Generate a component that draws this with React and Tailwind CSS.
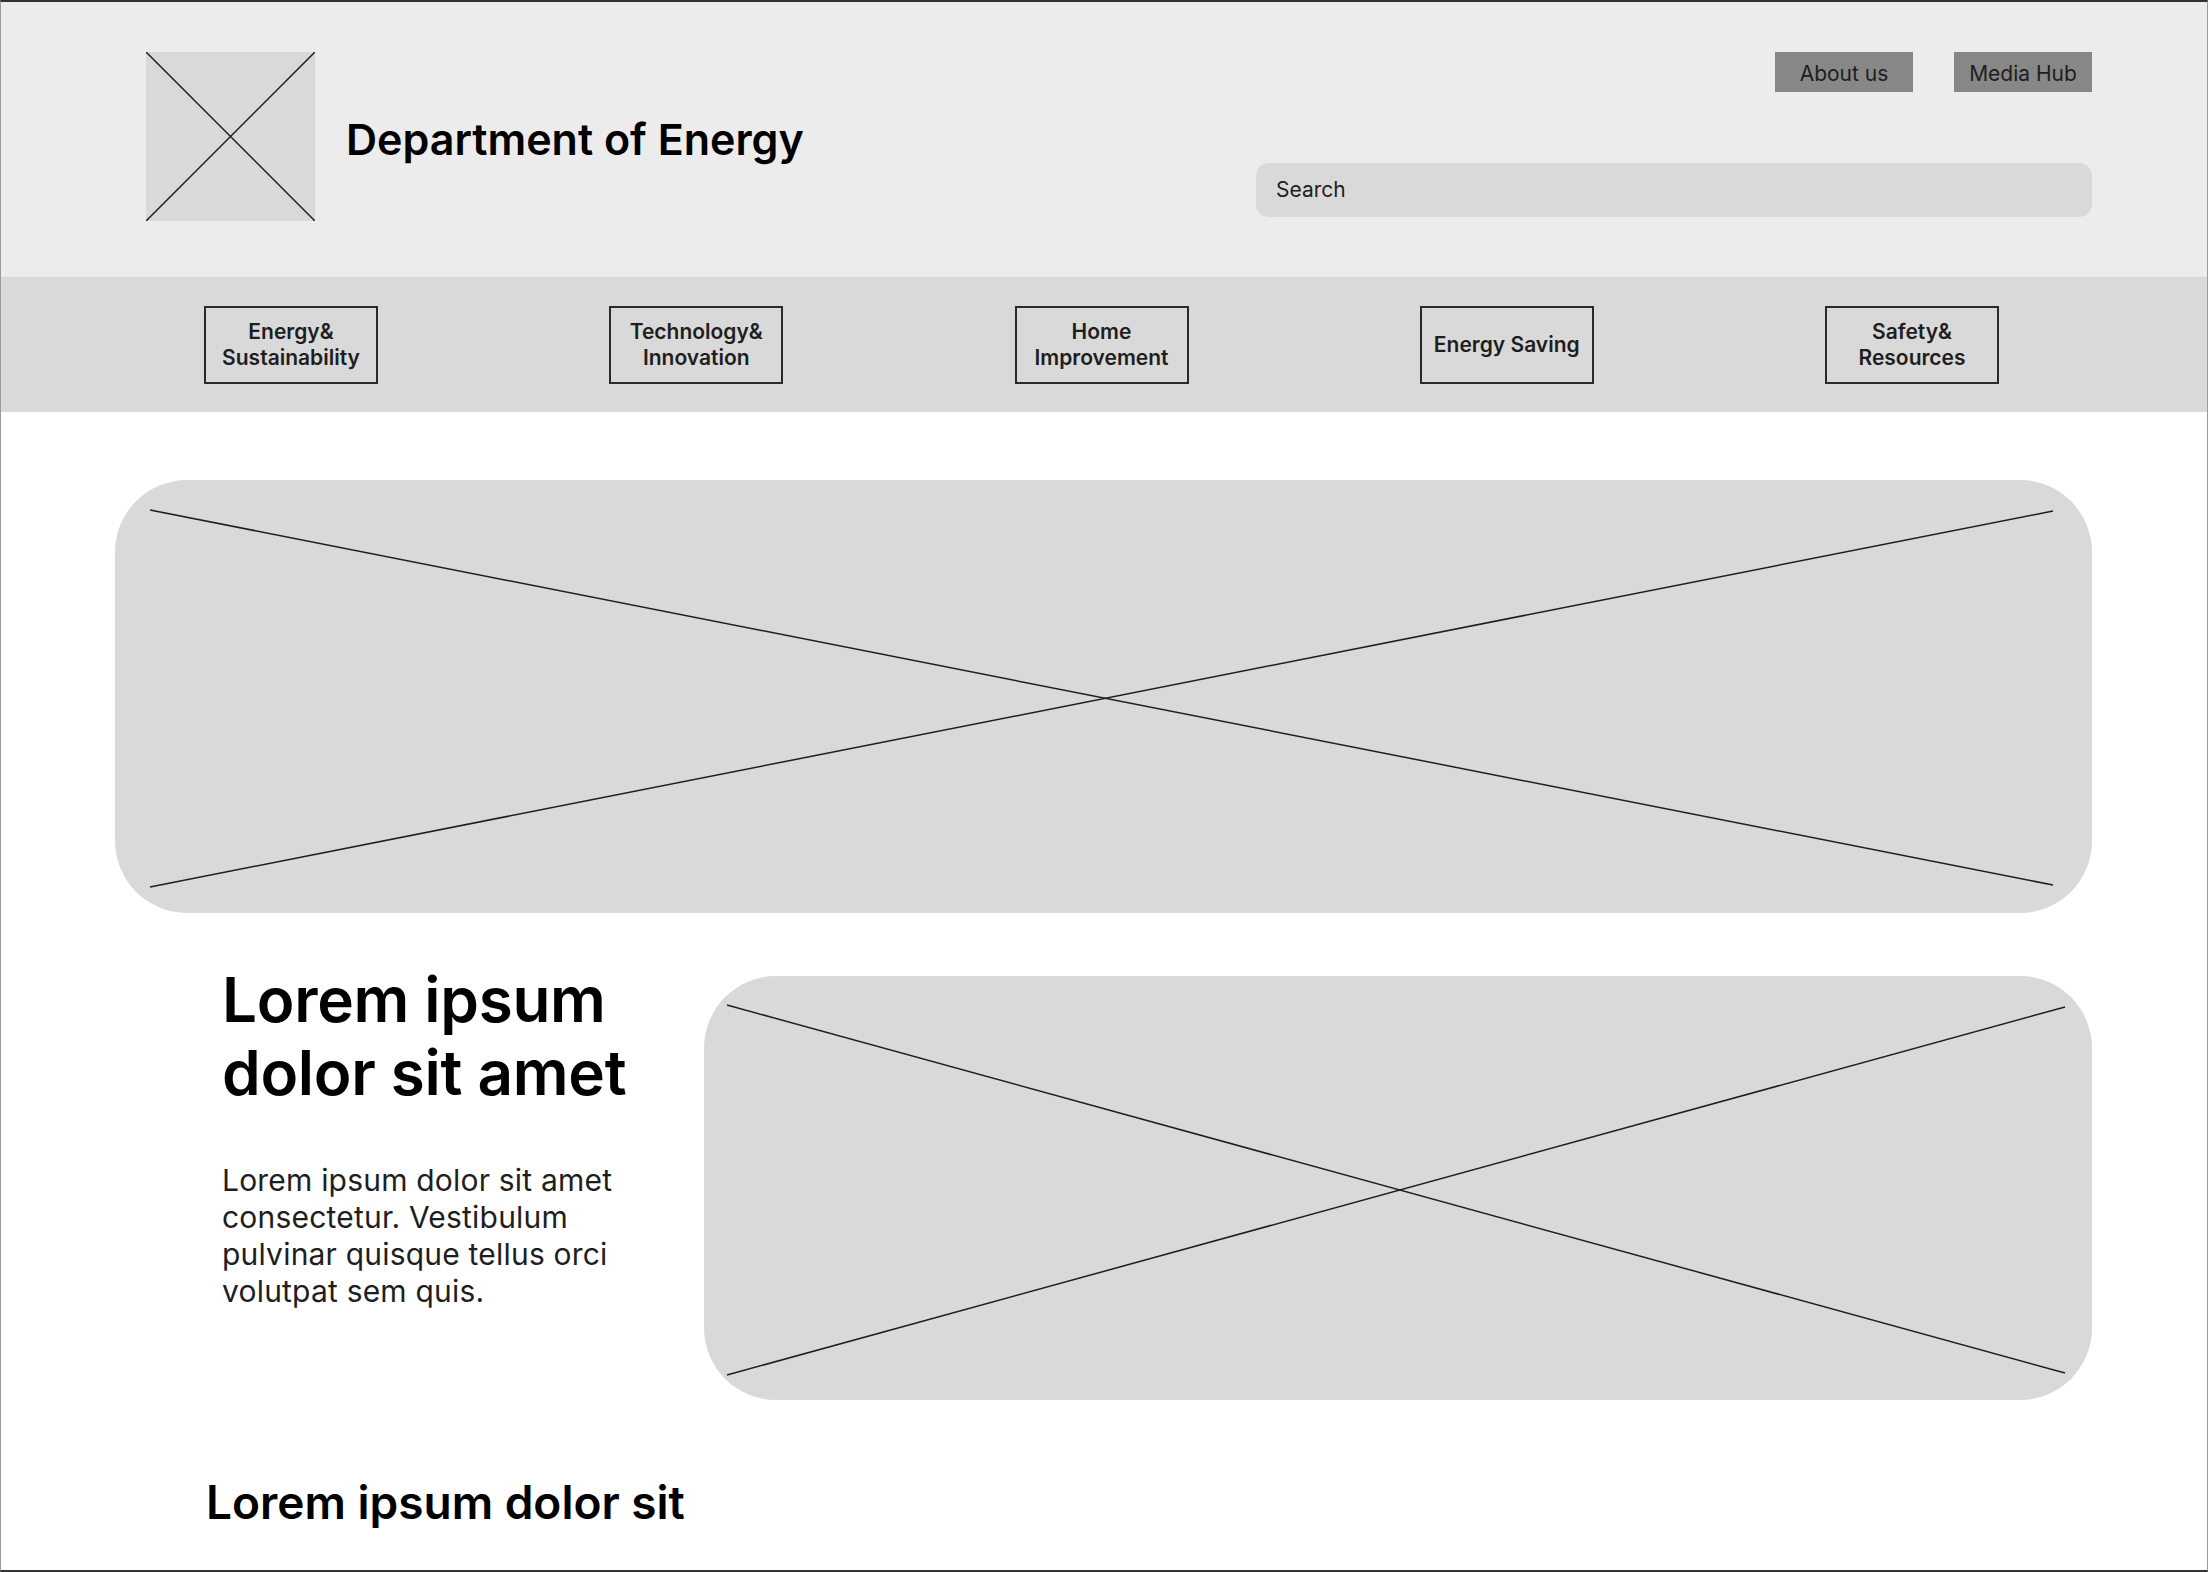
import React from 'react';

const navItems = [
  ['Energy&', 'Sustainability'],
  ['Technology&', 'Innovation'],
  ['Home', 'Improvement'],
  ['Energy Saving'],
  ['Safety&', 'Resources'],
];

function Placeholder({ w, h, lines, className }) {
  return (
    <div className={`relative shrink-0 bg-[#d9d9d9] overflow-hidden ${className}`}>
      <svg className="absolute inset-0 w-full h-full" viewBox={`0 0 ${w} ${h}`} preserveAspectRatio="none">
        {lines.map((l, i) => (
          <line key={i} x1={l[0]} y1={l[1]} x2={l[2]} y2={l[3]} stroke="#1e1e1e" strokeWidth="1.5" />
        ))}
      </svg>
    </div>
  );
}

export default function App() {
  return (
    <div className="w-[2208px] h-[1572px] overflow-hidden bg-white border-y-2 border-y-[#333] border-x border-x-[#9a9a9a] font-['Inter','Liberation_Sans',sans-serif] text-black">
      {/* header */}
      <header className="h-[275px] bg-[#ececec] flex justify-between pl-[145px] pr-[115px] pt-[50px]">
        <div className="flex items-center gap-[31px] h-[169px] self-start">
          <Placeholder w={169} h={169} className="w-[169px] h-[169px]" lines={[[0, 0, 169, 169], [0, 169, 169, 0]]} />
          <h1 className="text-[43px] font-semibold leading-none mt-[6px]">Department of Energy</h1>
        </div>
        <div className="flex flex-col items-end">
          <div className="flex gap-[41px]">
            <button className="w-[138px] h-[40px] bg-[#878787] text-[21px] text-[#1e1e1e] leading-none pt-[2px]">About us</button>
            <button className="w-[138px] h-[40px] bg-[#878787] text-[21px] text-[#1e1e1e] leading-none pt-[2px]">Media Hub</button>
          </div>
          <div className="mt-[71px] w-[836px] h-[54px] rounded-[13px] bg-[#d9d9d9] flex items-center px-[20px] text-[21px] text-[#1e1e1e]">
            Search
          </div>
        </div>
      </header>

      {/* nav */}
      <nav className="h-[135px] bg-[#d9d9d9] flex items-center justify-between pl-[203px] pr-[208px]">
        {navItems.map((item, i) => (
          <div key={i} className="w-[174px] h-[78px] border-2 border-[#2a2a2a] flex flex-col items-center justify-center text-center text-[21px] font-semibold leading-[26px] text-[#1e1e1e]">
            {item.map(t => <span key={t}>{t}</span>)}
          </div>
        ))}
      </nav>

      {/* hero */}
      <div className="pt-[68px] pl-[114px]">
        <Placeholder
          w={1977}
          h={433}
          className="w-[1977px] h-[433px] rounded-[72px]"
          lines={[[35, 30, 1938, 405], [35, 407, 1938, 31]]}
        />
      </div>

      {/* feature */}
      <section className="flex pl-[221px] pt-[50px]">
        <div className="w-[420px] shrink-0">
          <h2 className="text-[62px] font-semibold leading-[73px] tracking-[-0.3px]">Lorem ipsum dolor sit amet</h2>
          <p className="mt-[53px] text-[30px] leading-[37px] tracking-[0.2px] text-[#1e1e1e]">
            Lorem ipsum dolor sit amet consectetur. Vestibulum pulvinar quisque tellus orci volutpat sem quis.
          </p>
        </div>
        <Placeholder
          w={1388}
          h={424}
          className="ml-[62px] mt-[13px] w-[1388px] h-[424px] rounded-[72px]"
          lines={[[23, 29, 1361, 397], [23, 399, 1361, 31]]}
        />
      </section>

      <h2 className="pl-[205px] pt-[76px] text-[46px] font-semibold leading-[53px]">Lorem ipsum dolor sit</h2>
    </div>
  );
}
